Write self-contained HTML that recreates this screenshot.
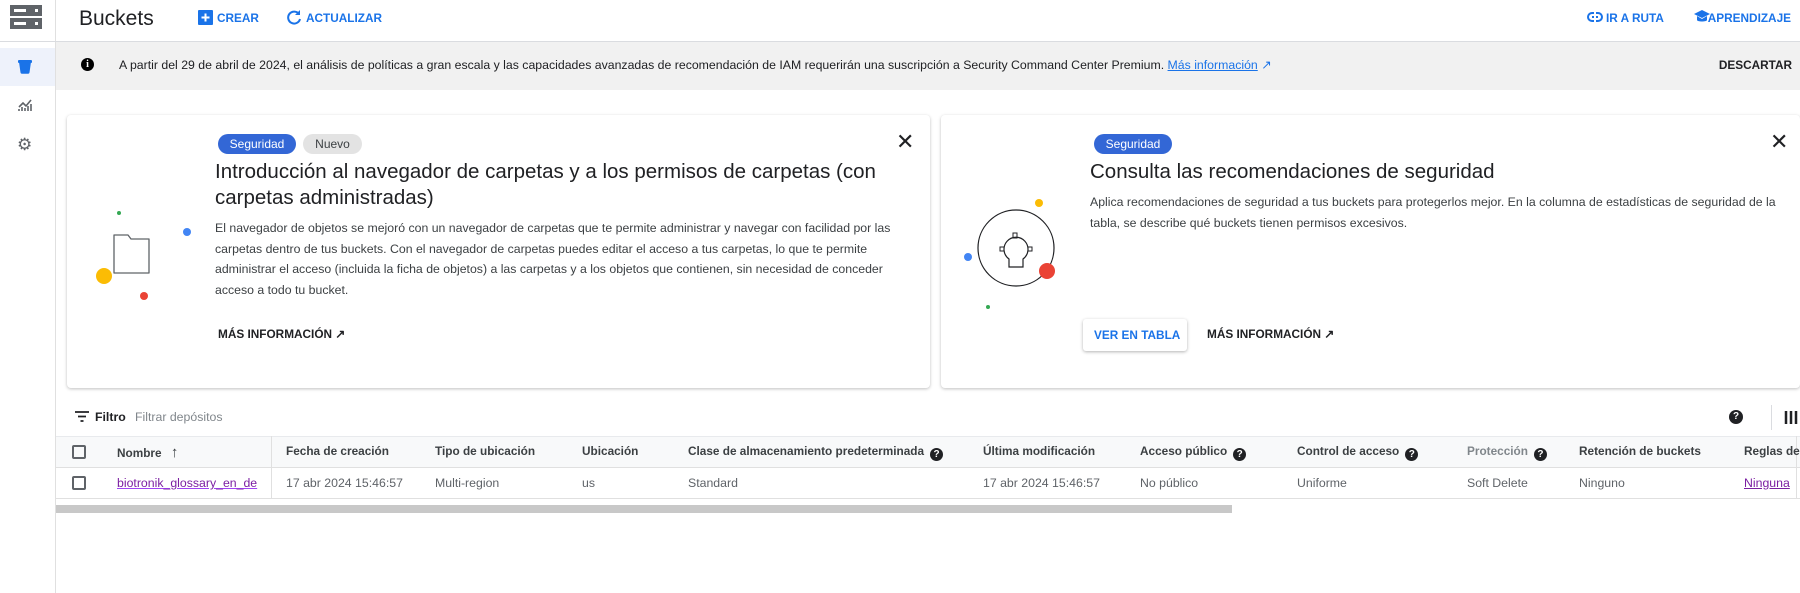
<!DOCTYPE html>
<html><head><meta charset="utf-8"><style>
*{box-sizing:border-box;margin:0;padding:0}
body{width:1800px;height:593px;overflow:hidden;background:#fff;font-family:"Liberation Sans",Arial,sans-serif;color:#202124;position:relative}
.a{position:absolute;white-space:nowrap}
.blue{color:#1a73e8}
.btn{font-size:11.8px;font-weight:bold;letter-spacing:0}
.chip{position:absolute;height:20px;border-radius:10px;font-size:12px;line-height:20px;text-align:center}
.card{position:absolute;top:115px;height:273px;background:#fff;border-radius:4px;box-shadow:0 1px 3px rgba(0,0,0,.25)}
.title{position:absolute;font-size:20.5px;line-height:26px;color:#202124}
.body{position:absolute;font-size:12.3px;line-height:20.5px;color:#3c4043}
.th{position:absolute;top:444px;font-size:11.8px;font-weight:bold;color:#3c4043;white-space:nowrap}
.td{position:absolute;top:476px;font-size:12.3px;color:#5f6368;white-space:nowrap}
.q{display:inline-block;width:13px;height:13px;border-radius:50%;background:#202124;color:#fff;font-size:10px;line-height:13px;text-align:center;font-weight:bold;vertical-align:-2px;margin-left:6px}
</style></head><body>
<div class="a" style="left:55px;top:0;width:1px;height:593px;background:#e0e0e0"></div>
<div class="a" style="left:0;top:41px;width:1800px;height:1px;background:#dadce0"></div>
<svg class="a" style="left:10px;top:5px" width="32" height="24"><rect x="0" y="0" width="32" height="11" fill="#5f6368"/><rect x="0" y="13" width="32" height="11" fill="#5f6368"/><rect x="4" y="4" width="12" height="3" fill="#fff"/><rect x="4" y="17" width="12" height="3" fill="#fff"/><rect x="25" y="4" width="3" height="3" fill="#fff"/><rect x="25" y="17" width="3" height="3" fill="#fff"/></svg>
<div class="a" style="left:0;top:48px;width:55px;height:38px;background:#eef2fb"></div>
<svg class="a" style="left:18px;top:59px" width="14" height="15"><path d="M1 3h12l-1.5 10.5a1.5 1.5 0 0 1-1.5 1.3H4a1.5 1.5 0 0 1-1.5-1.3z" fill="#1a73e8"/><rect x="0" y="1" width="14" height="3" rx="1" fill="#1a73e8"/></svg>
<svg class="a" style="left:18px;top:98px" width="14" height="14"><path d="M1 9l4-4 3 3 5-6" stroke="#5f6368" fill="none" stroke-width="1.6"/><path d="M1 13V11M4 13V9M7 13V10M10 13V8M13 13V6" stroke="#5f6368" stroke-width="1.6"/></svg>
<div class="a" style="left:17px;top:135px;font-size:17px;color:#5f6368">⚙</div>
<div class="a" style="left:79px;top:7px;font-size:21px;color:#202124">Buckets</div>
<svg class="a" style="left:198px;top:10px" width="15" height="15"><rect width="15" height="15" rx="1" fill="#1a73e8"/><path d="M7.5 3.5v8M3.5 7.5h8" stroke="#fff" stroke-width="2"/></svg>
<div class="a btn blue" style="left:217px;top:11px">CREAR</div>
<svg class="a" style="left:286px;top:9px" width="16" height="16"><path d="M13 5A6 6 0 1 0 14 10" stroke="#1a73e8" stroke-width="2" fill="none"/><path d="M14 1v5h-5z" fill="#1a73e8"/></svg>
<div class="a btn blue" style="left:306px;top:11px">ACTUALIZAR</div>
<svg class="a" style="left:1587px;top:10px" width="16" height="14"><rect x="1" y="3" width="14" height="8" rx="4" stroke="#1a73e8" stroke-width="2" fill="none"/><rect x="5" y="6" width="6" height="2" fill="#1a73e8"/><rect x="7" y="2" width="2" height="10" fill="#fff"/></svg>
<div class="a btn blue" style="left:1606px;top:11px">IR A RUTA</div>
<svg class="a" style="left:1694px;top:9px" width="16" height="15"><path d="M8 1l8 4-8 4-8-4z" fill="#1a73e8"/><path d="M3 7v4c0 2 10 2 10 0V7L8 10z" fill="#1a73e8"/></svg>
<div class="a btn blue" style="right:9px;top:11px">APRENDIZAJE</div>
<div class="a" style="left:56px;top:42px;width:1744px;height:48px;background:#f1f1f1"></div>
<div class="a" style="left:81px;top:58px;width:13px;height:13px;border-radius:50%;background:#000;color:#fff;font-size:10px;font-weight:bold;text-align:center;line-height:13px;font-family:'Liberation Serif',serif">i</div>
<div class="a" style="left:119px;top:58px;font-size:12.3px;color:#202124">A partir del 29 de abril de 2024, el análisis de políticas a gran escala y las capacidades avanzadas de recomendación de IAM requerirán una suscripción a Security Command Center Premium. <span style="color:#1a73e8;text-decoration:underline">Más información</span> <span style="color:#1a73e8">↗</span></div>
<div class="a btn" style="right:8px;top:58px;color:#202124">DESCARTAR</div>
<div class="card" style="left:67px;width:863px"></div>
<div class="chip" style="left:218px;top:134px;width:78px;background:#3367d6;color:#fff">Seguridad</div>
<div class="chip" style="left:303px;top:134px;width:59px;background:#e3e3e3;color:#3c4043">Nuevo</div>
<div class="title" style="left:215px;top:159px;width:700px">Introducción al navegador de carpetas y a los permisos de carpetas (con carpetas administradas)</div>
<div class="body" style="left:215px;top:218px;width:705px">El navegador de objetos se mejoró con un navegador de carpetas que te permite administrar y navegar con facilidad por las carpetas dentro de tus buckets. Con el navegador de carpetas puedes editar el acceso a tus carpetas, lo que te permite administrar el acceso (incluida la ficha de objetos) a las carpetas y a los objetos que contienen, sin necesidad de conceder acceso a todo tu bucket.</div>
<div class="a btn" style="left:218px;top:327px;color:#202124">MÁS INFORMACIÓN ↗</div>
<div class="a" style="left:896px;top:129px;font-size:22px;color:#202124">✕</div>
<svg class="a" style="left:90px;top:195px" width="110" height="110"><path d="M24 40h14l3 4h18v34H24z" fill="#fff" stroke="#5f6368" stroke-width="1.3" stroke-linejoin="round"/><circle cx="14" cy="81" r="8" fill="#fbbc04"/><circle cx="54" cy="101" r="4" fill="#ea4335"/><circle cx="97" cy="37" r="4" fill="#4285f4"/><circle cx="29" cy="18" r="2" fill="#34a853"/></svg>
<div class="card" style="left:941px;width:859px"></div>
<div class="chip" style="left:1094px;top:134px;width:78px;background:#3367d6;color:#fff">Seguridad</div>
<div class="title" style="left:1090px;top:159px">Consulta las recomendaciones de seguridad</div>
<div class="body" style="left:1090px;top:192px;width:700px">Aplica recomendaciones de seguridad a tus buckets para protegerlos mejor. En la columna de estadísticas de seguridad de la tabla, se describe qué buckets tienen permisos excesivos.</div>
<div class="a" style="left:1083px;top:319px;width:104px;height:32px;border-radius:3px;box-shadow:0 1px 3px rgba(0,0,0,.3);background:#fff"></div>
<div class="a btn blue" style="left:1094px;top:328px">VER EN TABLA</div>
<div class="a btn" style="left:1207px;top:327px;color:#202124">MÁS INFORMACIÓN ↗</div>
<div class="a" style="left:1770px;top:129px;font-size:22px;color:#202124">✕</div>
<svg class="a" style="left:960px;top:195px" width="110" height="120"><circle cx="56" cy="53" r="38" fill="#fff" stroke="#202124" stroke-width="1.2"/><path d="M49 72v-8a12 12 0 1 1 14 0v8z" fill="none" stroke="#202124" stroke-width="1.2"/><rect x="53" y="38" width="4" height="5" fill="none" stroke="#202124"/><rect x="40" y="52" width="4" height="4" fill="none" stroke="#202124"/><rect x="68" y="52" width="4" height="4" fill="none" stroke="#202124"/><circle cx="87" cy="76" r="8" fill="#ea4335"/><circle cx="79" cy="8" r="4" fill="#fbbc04"/><circle cx="8" cy="62" r="4" fill="#4285f4"/><circle cx="28" cy="112" r="2" fill="#34a853"/></svg>
<svg class="a" style="left:75px;top:411px" width="14" height="11"><path d="M0 1h14M3 5.5h8M5.5 10h3" stroke="#202124" stroke-width="1.8"/></svg>
<div class="a" style="left:95px;top:410px;font-size:12.3px;font-weight:bold;color:#202124">Filtro</div>
<div class="a" style="left:135px;top:410px;font-size:12.3px;color:#80868b">Filtrar depósitos</div>
<div class="a" style="left:1729px;top:410px;width:14px;height:14px;border-radius:50%;background:#202124;color:#fff;font-size:10px;font-weight:bold;text-align:center;line-height:14px">?</div>
<div class="a" style="left:1771px;top:405px;width:1px;height:25px;background:#dadce0"></div>
<svg class="a" style="left:1784px;top:411px" width="14" height="13"><path d="M2 0v13M7 0v13M12 0v13" stroke="#202124" stroke-width="2.5"/></svg>
<div class="a" style="left:56px;top:436px;width:1744px;height:32px;background:#f8f9fa;border-top:1px solid #e8eaed;border-bottom:1px solid #e0e0e0"></div>
<div class="a" style="left:56px;top:498px;width:1744px;height:1px;background:#e0e0e0"></div>
<div class="a" style="left:271px;top:436px;width:1px;height:63px;background:#e0e0e0"></div>
<div class="a" style="left:1796px;top:436px;width:1px;height:63px;background:#e0e0e0"></div>
<div class="a" style="left:72px;top:445px;width:14px;height:14px;border:2px solid #5f6368;border-radius:2px"></div>
<div class="a" style="left:72px;top:476px;width:14px;height:14px;border:2px solid #5f6368;border-radius:2px"></div>
<div class="th" style="left:117px">Nombre <span style="font-size:15px;margin-left:6px;font-weight:normal">↑</span></div>
<div class="th" style="left:286px">Fecha de creación</div>
<div class="th" style="left:435px">Tipo de ubicación</div>
<div class="th" style="left:582px">Ubicación</div>
<div class="th" style="left:688px">Clase de almacenamiento predeterminada<span class="q">?</span></div>
<div class="th" style="left:983px">Última modificación</div>
<div class="th" style="left:1140px">Acceso público<span class="q">?</span></div>
<div class="th" style="left:1297px">Control de acceso<span class="q">?</span></div>
<div class="th" style="left:1467px;color:#80868b">Protección<span class="q">?</span></div>
<div class="th" style="left:1579px">Retención de buckets</div>
<div class="th" style="left:1744px">Reglas de</div>
<div class="td" style="left:117px;color:#7b1fa2;text-decoration:underline;text-decoration-color:#a142f4">biotronik_glossary_en_de</div>
<div class="td" style="left:286px">17 abr 2024 15:46:57</div>
<div class="td" style="left:435px">Multi-region</div>
<div class="td" style="left:582px">us</div>
<div class="td" style="left:688px">Standard</div>
<div class="td" style="left:983px">17 abr 2024 15:46:57</div>
<div class="td" style="left:1140px">No público</div>
<div class="td" style="left:1297px">Uniforme</div>
<div class="td" style="left:1467px">Soft Delete</div>
<div class="td" style="left:1579px">Ninguno</div>
<div class="td" style="left:1744px;color:#7b1fa2;text-decoration:underline">Ninguna</div>
<div class="a" style="left:56px;top:505px;width:1176px;height:8px;background:#c8c8c8"></div>
</body></html>
